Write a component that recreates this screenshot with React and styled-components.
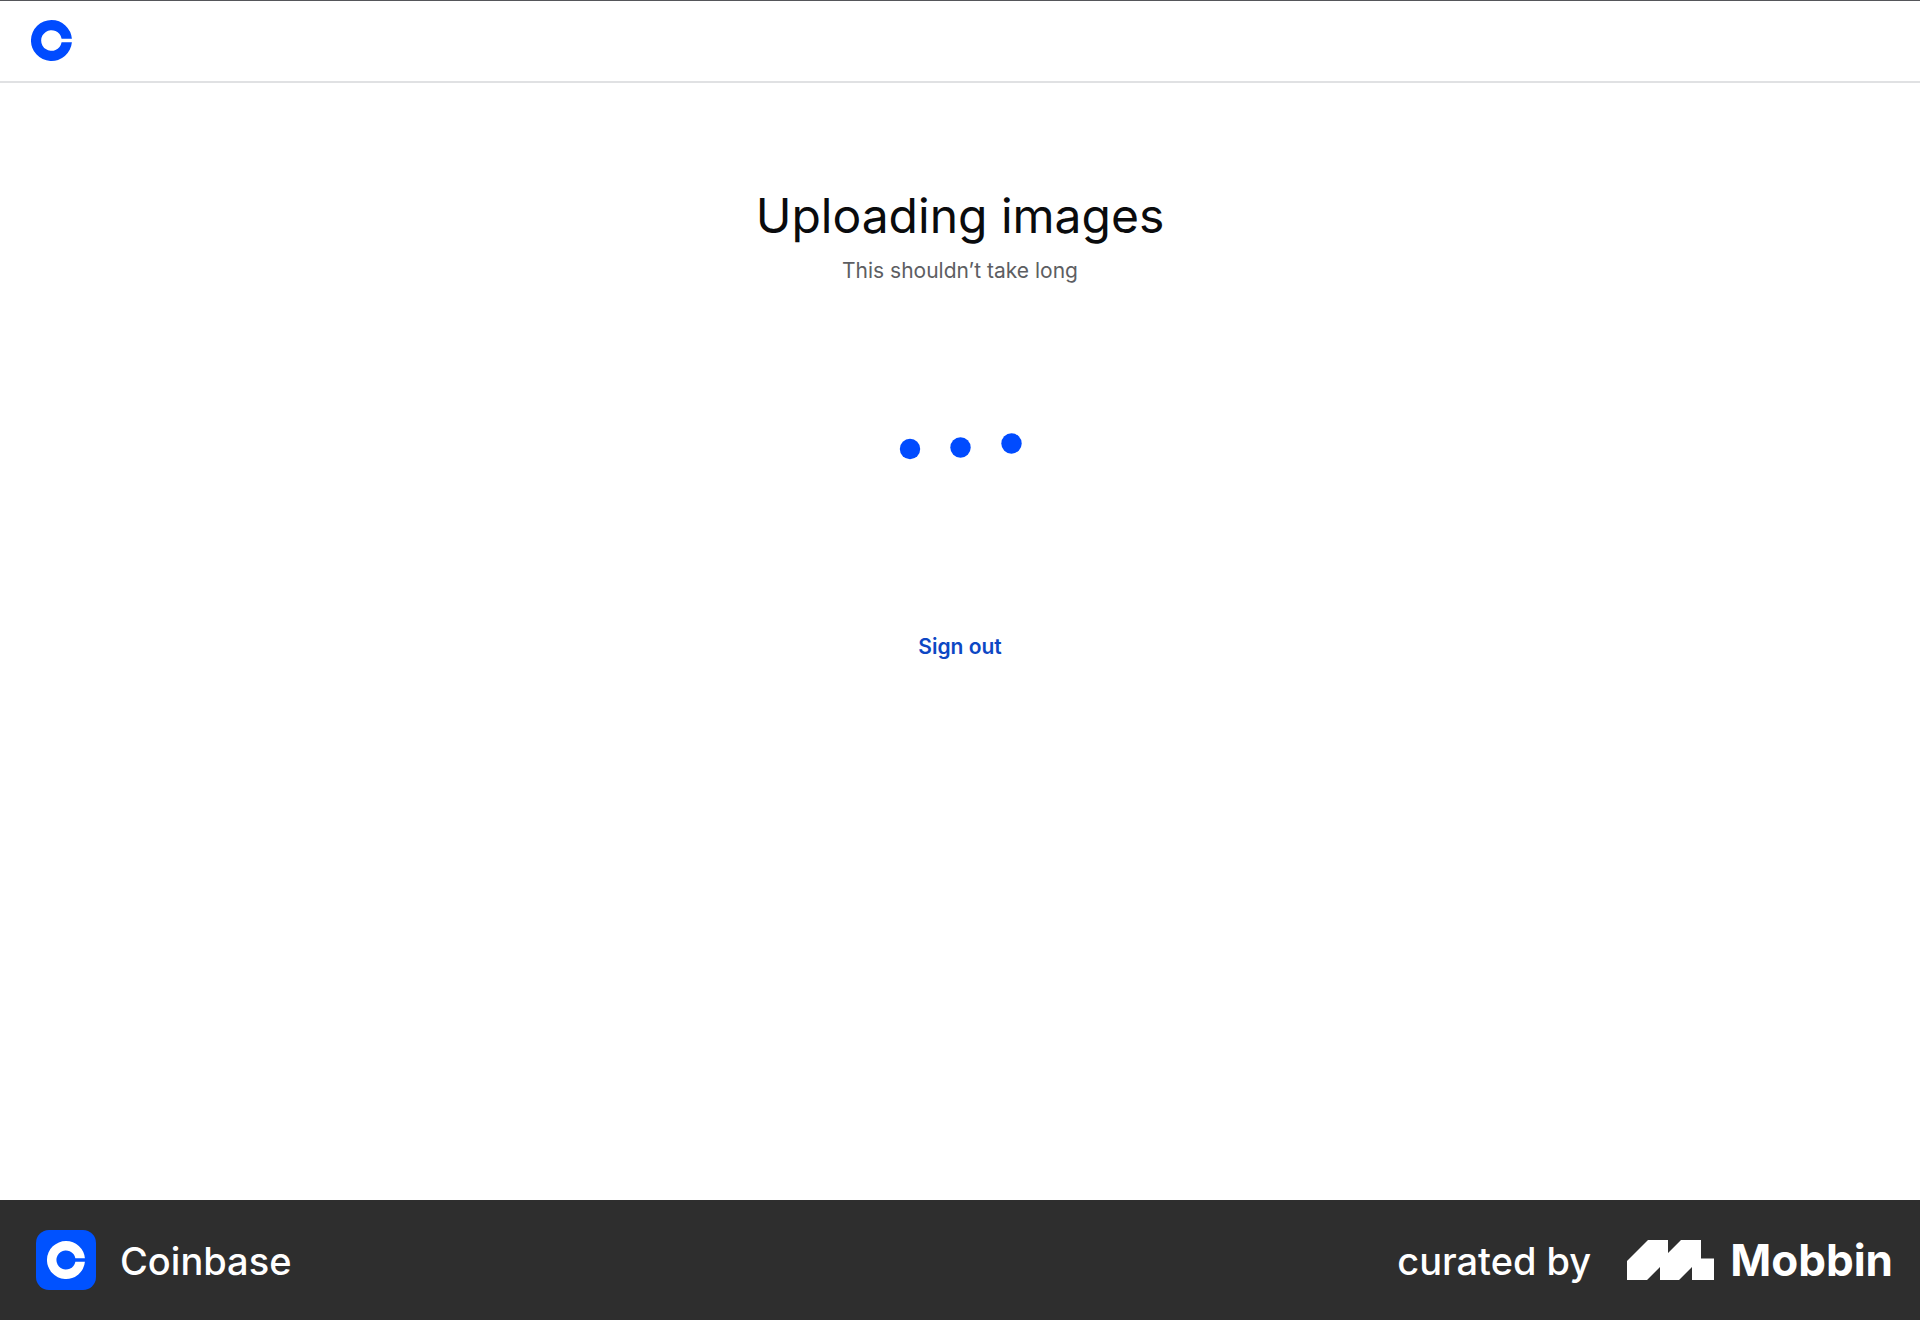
import React from 'react';
import styled, { createGlobalStyle } from 'styled-components';

const GlobalStyle = createGlobalStyle`
  *, *::before, *::after { box-sizing: border-box; }
  body {
    margin: 0;
    background: #ffffff;
    color: #0a0b0d;
    font-family: Inter, "Liberation Sans", sans-serif;
  }
`;

const Page = styled.div`
  display: flex;
  flex-direction: column;
  min-height: 100vh;
`;

const Header = styled.header`
  display: flex;
  align-items: center;
  padding: 19px 31px 20px;
  border-top: 1px solid #55565a;
  border-bottom: 2px solid #e0e1e3;
`;

const HomeLink = styled.a`
  display: block;
  color: #004bff;
`;

const Glyph = styled.svg`
  display: block;
  width: ${({ $size }) => $size}px;
  height: ${({ $size }) => $size}px;
`;

const Main = styled.main`
  flex: 1;
  display: flex;
  flex-direction: column;
  align-items: center;
  padding: 103px 24px 40px;
  text-align: center;
`;

const Title = styled.h1`
  margin: 0;
  font-size: 48px;
  font-weight: 400;
  line-height: 60px;
`;

const Subtitle = styled.p`
  margin: 10px 0 0;
  color: #5d5e62;
  font-size: 21px;
  line-height: 30px;
`;

const Loader = styled.svg`
  display: block;
  width: 124px;
  height: 28px;
  margin: 147px 0 164px;
  fill: #004bff;
`;

const SignOut = styled.button`
  padding: 10px 20px;
  border: 0;
  background: transparent;
  color: #0d47c4;
  font: 600 21px/24px Inter, "Liberation Sans", sans-serif;
  cursor: pointer;
`;

const Footer = styled.footer`
  display: flex;
  align-items: center;
  justify-content: space-between;
  height: 120px;
  padding: 0 27px 0 36px;
  background: #2e2e2e;
  color: #ffffff;
`;

const Group = styled.div`
  display: flex;
  align-items: center;
  gap: ${({ $gap }) => $gap}px;
`;

const AppTile = styled.div`
  display: grid;
  place-items: center;
  width: 60px;
  height: 60px;
  border-radius: 13px;
  background: #0052ff;
`;

const Label = styled.span`
  padding-top: 2px;
  font-size: 38px;
  font-weight: 500;
  line-height: 48px;
`;

const Brand = styled.a`
  display: flex;
  align-items: center;
  gap: 16px;
  color: inherit;
  text-decoration: none;
`;

const BrandMark = styled.svg`
  display: block;
  width: 87px;
  height: 40px;
`;

const BrandName = styled.span`
  font-size: 44px;
  font-weight: 700;
  line-height: 48px;
`;

function CoinGlyph({ size }) {
  return (
    <Glyph $size={size} viewBox="0 0 41 41" fill="currentColor" aria-hidden="true">
      <path d="M20.5 0A20.5 20.5 0 1 0 40.9 22.3H30.6A10.3 10.3 0 1 1 30.6 18.7H40.9A20.5 20.5 0 0 0 20.5 0Z" />
    </Glyph>
  );
}

export default function App() {
  return (
    <Page>
      <GlobalStyle />
      <Header>
        <HomeLink href="#" aria-label="Coinbase home">
          <CoinGlyph size={41} />
        </HomeLink>
      </Header>
      <Main>
        <Title>Uploading images</Title>
        <Subtitle>This shouldn’t take long</Subtitle>
        <Loader viewBox="0 0 124 28" role="img" aria-label="Uploading">
          <circle cx="12" cy="16" r="10.2" />
          <circle cx="62.5" cy="14.5" r="10.2" />
          <circle cx="113.5" cy="10.5" r="10.2" />
        </Loader>
        <SignOut type="button">Sign out</SignOut>
      </Main>
      <Footer>
        <Group $gap={24}>
          <AppTile>
            <CoinGlyph size={38} />
          </AppTile>
          <Label>Coinbase</Label>
        </Group>
        <Group $gap={36}>
          <Label>curated by</Label>
          <Brand href="#">
            <BrandMark viewBox="0 0 87 40" fill="currentColor" aria-hidden="true">
              <path d="M0 21L21 0H41V13L54 0H74V18.5H87V40H65V27L52 40H33V27L20 40H0Z" />
            </BrandMark>
            <BrandName>Mobbin</BrandName>
          </Brand>
        </Group>
      </Footer>
    </Page>
  );
}
